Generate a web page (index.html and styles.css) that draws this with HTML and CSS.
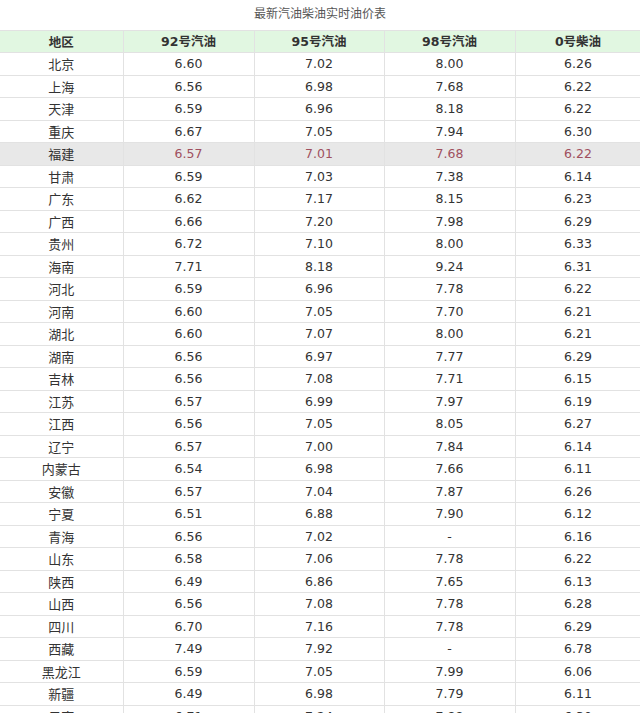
FILE: index.html
```html
<!DOCTYPE html>
<html lang="zh">
<head>
<meta charset="utf-8">
<link rel="stylesheet" href="styles.css">
</head>
<body>
<div class="title">最新汽油柴油实时油价表</div>
<table class="prices">
<colgroup><col class="c1"><col class="c2"><col class="c3"><col class="c4"><col class="c5"></colgroup>
<thead><tr><th>地区</th><th>92号汽油</th><th>95号汽油</th><th>98号汽油</th><th>0号柴油</th></tr></thead>
<tbody>
<tr><td>北京</td><td>6.60</td><td>7.02</td><td>8.00</td><td>6.26</td></tr>
<tr><td>上海</td><td>6.56</td><td>6.98</td><td>7.68</td><td>6.22</td></tr>
<tr><td>天津</td><td>6.59</td><td>6.96</td><td>8.18</td><td>6.22</td></tr>
<tr><td>重庆</td><td>6.67</td><td>7.05</td><td>7.94</td><td>6.30</td></tr>
<tr class="hl"><td>福建</td><td>6.57</td><td>7.01</td><td>7.68</td><td>6.22</td></tr>
<tr><td>甘肃</td><td>6.59</td><td>7.03</td><td>7.38</td><td>6.14</td></tr>
<tr><td>广东</td><td>6.62</td><td>7.17</td><td>8.15</td><td>6.23</td></tr>
<tr><td>广西</td><td>6.66</td><td>7.20</td><td>7.98</td><td>6.29</td></tr>
<tr><td>贵州</td><td>6.72</td><td>7.10</td><td>8.00</td><td>6.33</td></tr>
<tr><td>海南</td><td>7.71</td><td>8.18</td><td>9.24</td><td>6.31</td></tr>
<tr><td>河北</td><td>6.59</td><td>6.96</td><td>7.78</td><td>6.22</td></tr>
<tr><td>河南</td><td>6.60</td><td>7.05</td><td>7.70</td><td>6.21</td></tr>
<tr><td>湖北</td><td>6.60</td><td>7.07</td><td>8.00</td><td>6.21</td></tr>
<tr><td>湖南</td><td>6.56</td><td>6.97</td><td>7.77</td><td>6.29</td></tr>
<tr><td>吉林</td><td>6.56</td><td>7.08</td><td>7.71</td><td>6.15</td></tr>
<tr><td>江苏</td><td>6.57</td><td>6.99</td><td>7.97</td><td>6.19</td></tr>
<tr><td>江西</td><td>6.56</td><td>7.05</td><td>8.05</td><td>6.27</td></tr>
<tr><td>辽宁</td><td>6.57</td><td>7.00</td><td>7.84</td><td>6.14</td></tr>
<tr><td>内蒙古</td><td>6.54</td><td>6.98</td><td>7.66</td><td>6.11</td></tr>
<tr><td>安徽</td><td>6.57</td><td>7.04</td><td>7.87</td><td>6.26</td></tr>
<tr><td>宁夏</td><td>6.51</td><td>6.88</td><td>7.90</td><td>6.12</td></tr>
<tr><td>青海</td><td>6.56</td><td>7.02</td><td>-</td><td>6.16</td></tr>
<tr><td>山东</td><td>6.58</td><td>7.06</td><td>7.78</td><td>6.22</td></tr>
<tr><td>陕西</td><td>6.49</td><td>6.86</td><td>7.65</td><td>6.13</td></tr>
<tr><td>山西</td><td>6.56</td><td>7.08</td><td>7.78</td><td>6.28</td></tr>
<tr><td>四川</td><td>6.70</td><td>7.16</td><td>7.78</td><td>6.29</td></tr>
<tr><td>西藏</td><td>7.49</td><td>7.92</td><td>-</td><td>6.78</td></tr>
<tr><td>黑龙江</td><td>6.59</td><td>7.05</td><td>7.99</td><td>6.06</td></tr>
<tr><td>新疆</td><td>6.49</td><td>6.98</td><td>7.79</td><td>6.11</td></tr>
<tr><td>云南</td><td>6.71</td><td>7.24</td><td>7.88</td><td>6.30</td></tr>
</tbody>
</table>
</body>
</html>
```
FILE: styles.css
```css
html, body {
  margin: 0;
  padding: 0;
  background: #fff;
}
body {
  font-family: "DejaVu Sans", "Noto Sans CJK SC", sans-serif;
  color: #333;
  overflow: hidden;
}
.title {
  height: 30px;
  line-height: 26px;
  text-align: center;
  font-size: 12px;
  color: #555;
  font-family: "Noto Sans CJK SC", sans-serif;
}
.prices {
  width: 641px;
  border-collapse: collapse;
  table-layout: fixed;
}
.c1 { width: 123px; }
.c2 { width: 131px; }
.c3 { width: 130px; }
.c4 { width: 131px; }
.c5 { width: 126px; }
.prices th,
.prices td {
  border: 1px solid #e2e2e2;
  border-left: 1px solid #dcdcdc;
  padding: 0;
  text-align: center;
  font-size: 12.5px;
  font-weight: normal;
  height: 21.5px;
  line-height: 21.5px;
}
.prices th:first-child,
.prices td:first-child {
  border-left: none;
}
.prices td:first-child {
  font-family: "Noto Sans CJK SC", sans-serif;
  font-size: 13px;
}
.prices thead th {
  background: #e1f7e1;
  font-weight: bold;
  font-family: "DejaVu Sans", "Noto Sans CJK SC", sans-serif;
  font-size: 12.5px;
  height: 21px;
  line-height: 21px;
  color: #333;
}
.prices thead th:first-child {
  font-family: "Noto Sans CJK SC", sans-serif;
}
.prices tr.hl td {
  background: #e8e8e8;
  color: #a0505f;
}
.prices tr.hl td:first-child {
  color: #333;
}
```
